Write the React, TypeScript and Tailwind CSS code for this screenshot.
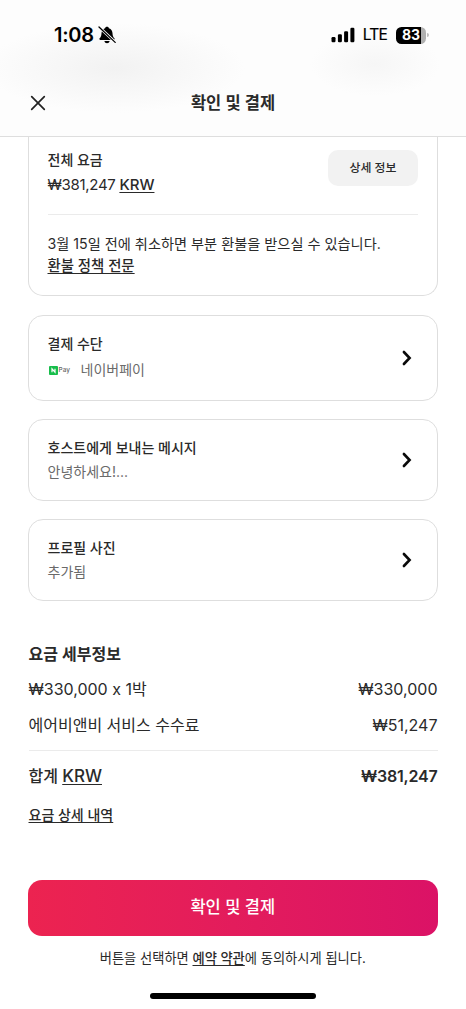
import type { ReactNode } from 'react';

interface OptionCardProps {
    title: string;
    className: string;
    children: ReactNode;
}

function ChevronIcon() {
    return (
        <svg viewBox="0 0 12 18" className="w-3 h-[18px]" fill="none" stroke="#0a0a0a" strokeWidth="2.6" strokeLinecap="round" strokeLinejoin="miter">
            <path d="M2.9 3 L8.6 9 L2.9 15" />
        </svg>
    );
}

function OptionCard({ title, className, children }: OptionCardProps) {
    return (
        <button className={`flex items-center justify-between w-full pl-[18.5px] pr-6 border border-[#dedede] rounded-[15px] text-left ${className}`}>
            <div>
                <p className="text-sm leading-6 font-medium">{title}</p>
                {children}
            </div>
            <ChevronIcon />
        </button>
    );
}

function StatusBar() {
    return (
        <div className="flex items-center justify-between h-[70px] pl-[54px] pr-[37px] text-black">
            <div className="flex items-center gap-1">
                <span className="text-[20px] leading-6 font-semibold tracking-[-0.3px]">1:08</span>
                {/* Silent mode bell */}
                <svg viewBox="0 0 18 18" className="w-[18px] h-[18px]">
                    <path d="M9 0.8C8 0.8 7.2 1.4 7.1 2.2C4.6 3 3.6 5 3.5 7.2C3.4 10 2.8 11 1.6 12.3C1.1 12.9 1.4 13.9 2.4 13.9H15.6C16.6 13.9 16.9 12.9 16.4 12.3C15.2 11 14.6 10 14.5 7.2C14.4 5 13.4 3 10.9 2.2C10.8 1.4 10 0.8 9 0.8Z" fill="#000" />
                    <path d="M6.4 15H11.6C11.3 16.5 10.3 17.2 9 17.2S6.7 16.5 6.4 15Z" fill="#000" />
                    <path d="M1.6 1.6L17 16" stroke="#fff" strokeWidth="2.8" />
                    <path d="M1 1L17.2 16.4" stroke="#000" strokeWidth="1.3" strokeLinecap="round" />
                </svg>
            </div>
            <div className="flex items-center">
                <svg viewBox="0 0 24 16" className="w-6 h-4" fill="#000">
                    <rect x="0.5" y="10" width="4" height="5.2" rx="1.2" />
                    <rect x="6.9" y="7.2" width="4" height="8" rx="1.2" />
                    <rect x="13.1" y="4.2" width="4" height="11" rx="1.2" />
                    <rect x="19.4" y="0.8" width="4" height="14.4" rx="1.2" />
                </svg>
                <span className="ml-2 text-[15.5px] tracking-[-0.8px] [-webkit-text-stroke:0.2px_#000]">LTE</span>
                <div className="flex items-center ml-[9px]">
                    <div className="flex items-center justify-center w-[30px] h-[17px] rounded-[5.5px] bg-linear-to-r from-black from-82% to-[#b0b0b0] to-82% text-white text-sm leading-none font-bold">
                        83
                    </div>
                    <div className="w-0.5 h-1 ml-px rounded-r-full bg-[#bdbdbd]" />
                </div>
            </div>
        </div>
    );
}

export default function App() {
    return (
        <div className="w-[466px] h-[1009px] overflow-hidden bg-white text-[#2a2a2a] font-['Inter','Noto_Sans_CJK_KR',sans-serif] [font-feature-settings:'calt'_0]">
            <header className="h-[137px] border-b border-[#dedede] bg-[radial-gradient(ellipse_130px_45px_at_115px_68px,#f2f2f2,transparent),radial-gradient(ellipse_65px_32px_at_375px_64px,#f6f6f6,transparent)] bg-[#fdfdfd]">
                <StatusBar />
                <div className="grid grid-cols-[76px_1fr_76px] items-center h-[66px]">
                    <svg viewBox="0 0 16 16" className="w-4 h-4 ml-[30px]" stroke="#222222" strokeWidth="1.7" strokeLinecap="round">
                        <path d="M1.7 1.7L14.3 14.3M14.3 1.7L1.7 14.3" />
                    </svg>
                    <h1 className="text-center text-[16.5px] font-semibold">확인 및 결제</h1>
                </div>
            </header>

            <main className="pl-7 pr-[28.5px]">
                <section className="h-[159px] px-[18.5px] pt-[11px] border border-t-0 border-[#dedede] rounded-b-[15px]">
                    <div className="flex justify-between h-[67px] border-b border-[#ebebeb]">
                        <div>
                            <p className="text-sm leading-6 font-medium">전체 요금</p>
                            <p className="text-[15px] leading-[25px] tracking-[-0.3px]">
                                ₩381,247 <span className="font-medium tracking-normal underline underline-offset-2">KRW</span>
                            </p>
                        </div>
                        <button className="w-[90px] h-9 mt-0.5 rounded-[10px] bg-[#f2f2f2] text-[11.9px] font-medium">상세 정보</button>
                    </div>
                    <p className="pt-[18px] text-[14.2px] leading-[22px] whitespace-nowrap">
                        3월 15일 전에 취소하면 부분 환불을 받으실 수 있습니다.
                    </p>
                    <p className="text-[14.4px] leading-[22px] font-medium underline underline-offset-2">환불 정책 전문</p>
                </section>

                <OptionCard title="결제 수단" className="h-[86px] mt-[19px]">
                    <div className="flex items-center text-sm leading-7 text-[#6a6a6a]">
                        <svg viewBox="0 0 9 9" className="w-[9px] h-[9px] ml-px">
                            <rect width="9" height="9" rx="1" fill="#17bd4b" />
                            <path d="M3 6.2V2.8L6 6.2V2.8" fill="none" stroke="#fff" strokeWidth="1.2" />
                        </svg>
                        <span className="w-[22px] ml-px text-[6.5px] font-medium">Pay</span>
                        <span>네이버페이</span>
                    </div>
                </OptionCard>
                <OptionCard title="호스트에게 보내는 메시지" className="h-[82px] mt-[18px]">
                    <p className="text-sm leading-6 text-[#6a6a6a]">안녕하세요!...</p>
                </OptionCard>
                <OptionCard title="프로필 사진" className="h-[82px] mt-[18px]">
                    <p className="text-sm leading-6 text-[#6a6a6a]">추가됨</p>
                </OptionCard>

                <section className="pt-[38px] pl-[0.5px]">
                    <h2 className="text-base leading-[30px] font-semibold">요금 세부정보</h2>
                    <div className="flex justify-between pt-0.5 text-base leading-9">
                        <span>₩330,000 x 1박</span>
                        <span>₩330,000</span>
                    </div>
                    <div className="flex justify-between h-9 text-base leading-9">
                        <span>에어비앤비 서비스 수수료</span>
                        <span>₩51,247</span>
                    </div>
                    <div className="flex justify-between mt-[7px] pt-[9px] border-t border-[#ebebeb] text-base leading-8 font-medium">
                        <span>합계 <span className="text-[17px] underline underline-offset-2">KRW</span></span>
                        <span className="font-semibold tracking-[-0.2px]">₩381,247</span>
                    </div>
                    <p className="pt-[7px] text-sm leading-8 font-medium underline underline-offset-2">요금 상세 내역</p>
                </section>

                <button className="w-full h-14 mt-[49px] pb-0.5 rounded-[14px] bg-linear-to-r from-[#ec2350] via-[#e31c5c] to-[#db1266] text-white text-[16.5px] font-medium">
                    확인 및 결제
                </button>
                <p className="pt-2.5 text-center text-[13.25px] leading-6 whitespace-nowrap">
                    버튼을 선택하면 <span className="font-medium underline underline-offset-2">예약 약관</span>에 동의하시게 됩니다.
                </p>
            </main>
            <div className="w-[166px] h-1.5 mx-auto mt-[23px] rounded-full bg-black" />
        </div>
    );
}
